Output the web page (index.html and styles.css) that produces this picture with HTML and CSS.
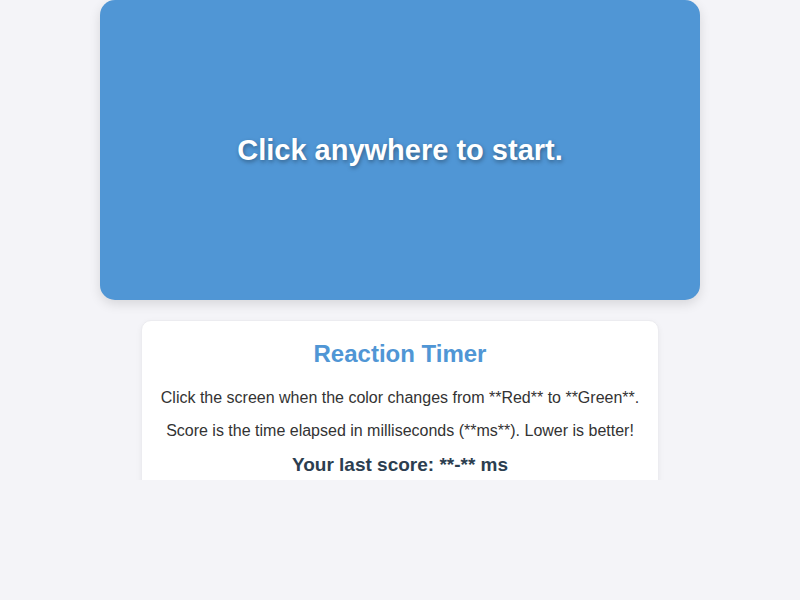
FILE: index.html
```html
<!DOCTYPE html>
<html lang="en">
<head>
  <meta charset="UTF-8">
  <meta name="viewport" content="width=device-width, initial-scale=1.0">
  <title>Reaction Timer</title>
  <link rel="stylesheet" href="styles.css">
</head>
<body>
  <div class="page">
    <div id="clickArea" class="click-area waiting">
      <h2 id="message">Click anywhere to start.</h2>
    </div>
    <div class="info-box">
      <h1>Reaction Timer</h1>
      <p>Click the screen when the color changes from **Red** to **Green**.</p>
      <p>Score is the time elapsed in milliseconds (**ms**). Lower is better!</p>
      <h3 class="score">Your last score: <span id="lastScore">**-**</span> ms</h3>
    </div>
  </div>
</body>
</html>
```

FILE: styles.css
```css
body {
  background-color: #f4f4f8;
  font-family: "Liberation Sans", Arial, sans-serif;
  margin: 0;
  padding: 0;
  color: #333;
}
.page {
  height: 480px;
  overflow: hidden;
  display: flex;
  flex-direction: column;
  align-items: center;
  gap: 20px;
}
.click-area {
  width: 600px;
  height: 300px;
  flex-shrink: 0;
  border-radius: 15px;
  box-shadow: 0 4px 12px rgba(0, 0, 0, 0.12);
  display: flex;
  justify-content: center;
  align-items: center;
  cursor: pointer;
}
.waiting {
  background-color: #5096d5;
}
#message {
  margin: 0;
  color: white;
  font-size: 29px;
  font-weight: bold;
  text-shadow: 1px 2px 4px rgba(0, 0, 0, 0.35);
}
/* Instructions card */
.info-box {
  width: 518px;
  box-sizing: border-box;
  background-color: white;
  border: 1px solid #ececf0;
  border-radius: 10px;
  box-shadow: 0 2px 6px rgba(0, 0, 0, 0.05);
  padding: 19px 12px 20px;
  text-align: center;
}
.info-box h1 {
  margin: 0 0 20px;
  font-size: 24px;
  color: #5096d5;
}
.info-box p {
  margin: 0 0 14px;
  font-size: 16px;
  line-height: 19px;
  white-space: nowrap;
}
.score {
  margin: 6px 0 0;
  font-size: 19px;
  color: #2c3e50;
}
```
